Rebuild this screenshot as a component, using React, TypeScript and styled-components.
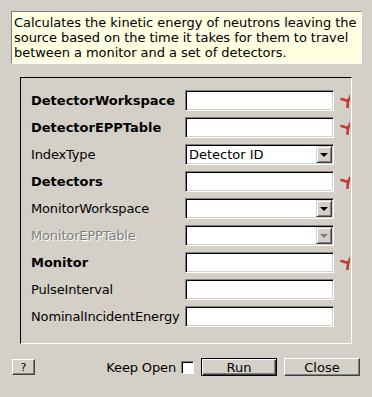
import styled, { createGlobalStyle } from "styled-components";

const GlobalStyle = createGlobalStyle`
  html, body {
    margin: 0;
    padding: 0;
    background: #d4d0c8;
  }
  body {
    font-family: "DejaVu Sans", "Liberation Sans", sans-serif;
    font-size: 13px;
    color: #000;
  }
`;

type Field = {
  name: string;
  kind: "text" | "combo";
  bold?: boolean;
  required?: boolean;
  disabled?: boolean;
  value?: string;
};

const fields: Field[] = [
  { name: "DetectorWorkspace", kind: "text", bold: true, required: true },
  { name: "DetectorEPPTable", kind: "text", bold: true, required: true },
  { name: "IndexType", kind: "combo", value: "Detector ID" },
  { name: "Detectors", kind: "text", bold: true, required: true },
  { name: "MonitorWorkspace", kind: "combo" },
  { name: "MonitorEPPTable", kind: "combo", disabled: true },
  { name: "Monitor", kind: "text", bold: true, required: true },
  { name: "PulseInterval", kind: "text" },
  { name: "NominalIncidentEnergy", kind: "text" },
];

// red "required" marker, cut off by the panel's right edge like in Qt
function RequiredStar() {
  return (
    <StarIcon width="10" height="14" viewBox="0 0 10 14">
      <g stroke="#c23a2c" strokeWidth="2.6" strokeLinecap="round">
        <line x1="8" y1="7" x2="7.5" y2="13" />
        <line x1="8" y1="7" x2="1.5" y2="5" />
        <line x1="8" y1="7" x2="11" y2="1" />
      </g>
    </StarIcon>
  );
}

function ComboBox({ value, disabled }: { value?: string; disabled?: boolean }) {
  return (
    <Sunken>
      <ComboText>{value}</ComboText>
      <ArrowButton>
        <Triangle $disabled={disabled} />
      </ArrowButton>
    </Sunken>
  );
}

export default function App() {
  return (
    <Dialog>
      <GlobalStyle />
      <Description>
        Calculates the kinetic energy of neutrons leaving the source based on
        the time it takes for them to travel between a monitor and a set of
        detectors.
      </Description>
      <Panel>
        <FormGrid>
          {fields.map((f) => (
            <Row key={f.name}>
              <Label $bold={f.bold} $disabled={f.disabled}>
                {f.name}
              </Label>
              {f.kind === "combo" ? (
                <ComboBox value={f.value} disabled={f.disabled} />
              ) : (
                <Sunken />
              )}
              <StarCell>{f.required && <RequiredStar />}</StarCell>
            </Row>
          ))}
        </FormGrid>
      </Panel>
      <ButtonBar>
        <HelpButton>?</HelpButton>
        <Spacer />
        <KeepOpen>
          Keep Open
          <CheckBox />
        </KeepOpen>
        <DefaultButton>Run</DefaultButton>
        <PushButton>Close</PushButton>
      </ButtonBar>
    </Dialog>
  );
}

const Dialog = styled.div`
  width: 372px;
  height: 397px;
  box-sizing: border-box;
  padding: 11px 10px 0 11px;
  display: flex;
  flex-direction: column;
  background: #d4d0c8;
`;

const Description = styled.div`
  box-sizing: border-box;
  width: 351px;
  height: 53px;
  padding: 3px 2px 0 2px;
  line-height: 15px;
  letter-spacing: -0.05px;
  background: #ffffe1;
  border-top: 1px solid #808080;
  border-left: 1px solid #808080;
  border-right: 1px solid #ffffff;
  border-bottom: 1px solid #ffffff;
`;

const Panel = styled.div`
  box-sizing: border-box;
  margin: 13px 0 0 9px;
  width: 332px;
  height: 267px;
  padding: 12px 0 0 10px;
  border-top: 1px solid #000;
  border-left: 1px solid #000;
  border-right: 1px solid #fff;
  border-bottom: 1px solid #fff;
  overflow: hidden;
`;

const FormGrid = styled.div`
  display: flex;
  flex-direction: column;
  gap: 6px;
`;

const Row = styled.div`
  display: grid;
  grid-template-columns: 154px 149px 16px;
  align-items: center;
  height: 21px;
`;

const Label = styled.span<{ $bold?: boolean; $disabled?: boolean }>`
  font-weight: ${(p) => (p.$bold ? "bold" : "normal")};
  color: ${(p) => (p.$disabled ? "#808080" : "#000")};
  text-shadow: ${(p) => (p.$disabled ? "1px 1px 0 #ffffff" : "none")};
  letter-spacing: ${(p) => (p.$bold ? "0" : "-0.15px")};
  white-space: nowrap;
`;

const Sunken = styled.div`
  box-sizing: border-box;
  height: 21px;
  display: flex;
  align-items: center;
  background: #fff;
  border-top: 1px solid #808080;
  border-left: 1px solid #808080;
  border-right: 1px solid #ffffff;
  border-bottom: 1px solid #ffffff;
  box-shadow: inset 1px 1px 0 #000, inset -1px -1px 0 #d4d0c8;
`;

const ComboText = styled.span`
  flex: 1;
  padding-left: 3px;
  white-space: nowrap;
`;

const ArrowButton = styled.div`
  box-sizing: border-box;
  width: 16px;
  height: 17px;
  margin-right: 1px;
  display: flex;
  align-items: center;
  justify-content: center;
  background: #d4d0c8;
  border-top: 1px solid #d4d0c8;
  border-left: 1px solid #d4d0c8;
  border-right: 1px solid #404040;
  border-bottom: 1px solid #404040;
  box-shadow: inset 1px 1px 0 #fff, inset -1px -1px 0 #808080;
`;

const Triangle = styled.div<{ $disabled?: boolean }>`
  width: 0;
  height: 0;
  border-left: 4px solid transparent;
  border-right: 4px solid transparent;
  border-top: 4px solid ${(p) => (p.$disabled ? "#808080" : "#000")};
  margin-top: 1px;
`;

const StarCell = styled.div`
  display: flex;
  align-items: center;
  padding-left: 6px;
  height: 21px;
`;

const StarIcon = styled.svg`
  display: block;
  flex-shrink: 0;
`;

const ButtonBar = styled.div`
  display: flex;
  align-items: center;
  margin-top: 14px;
  padding: 0 2px 0 1px;
`;

const Spacer = styled.div`
  flex: 1;
`;

const PushButton = styled.button`
  box-sizing: border-box;
  width: 76px;
  height: 18px;
  padding: 0;
  font: inherit;
  color: #000;
  background: #d4d0c8;
  border-top: 1px solid #fff;
  border-left: 1px solid #fff;
  border-right: 1px solid #404040;
  border-bottom: 1px solid #404040;
  box-shadow: inset -1px -1px 0 #808080;
  margin-left: 7px;
`;

const DefaultButton = styled(PushButton)`
  border: 1px solid #000;
  box-shadow: inset 1px 1px 0 #fff, inset -1px -1px 0 #404040,
    inset -2px -2px 0 #808080;
`;

const HelpButton = styled(PushButton)`
  width: 23px;
  height: 16px;
  margin-left: 0;
  font-size: 11px;
`;

const KeepOpen = styled.label`
  display: flex;
  align-items: center;
  gap: 5px;
  white-space: nowrap;
  letter-spacing: -0.15px;
`;

const CheckBox = styled.span`
  box-sizing: border-box;
  width: 13px;
  height: 13px;
  background: #fff;
  border-top: 1px solid #808080;
  border-left: 1px solid #808080;
  border-right: 1px solid #fff;
  border-bottom: 1px solid #fff;
  box-shadow: inset 1px 1px 0 #000;
`;
